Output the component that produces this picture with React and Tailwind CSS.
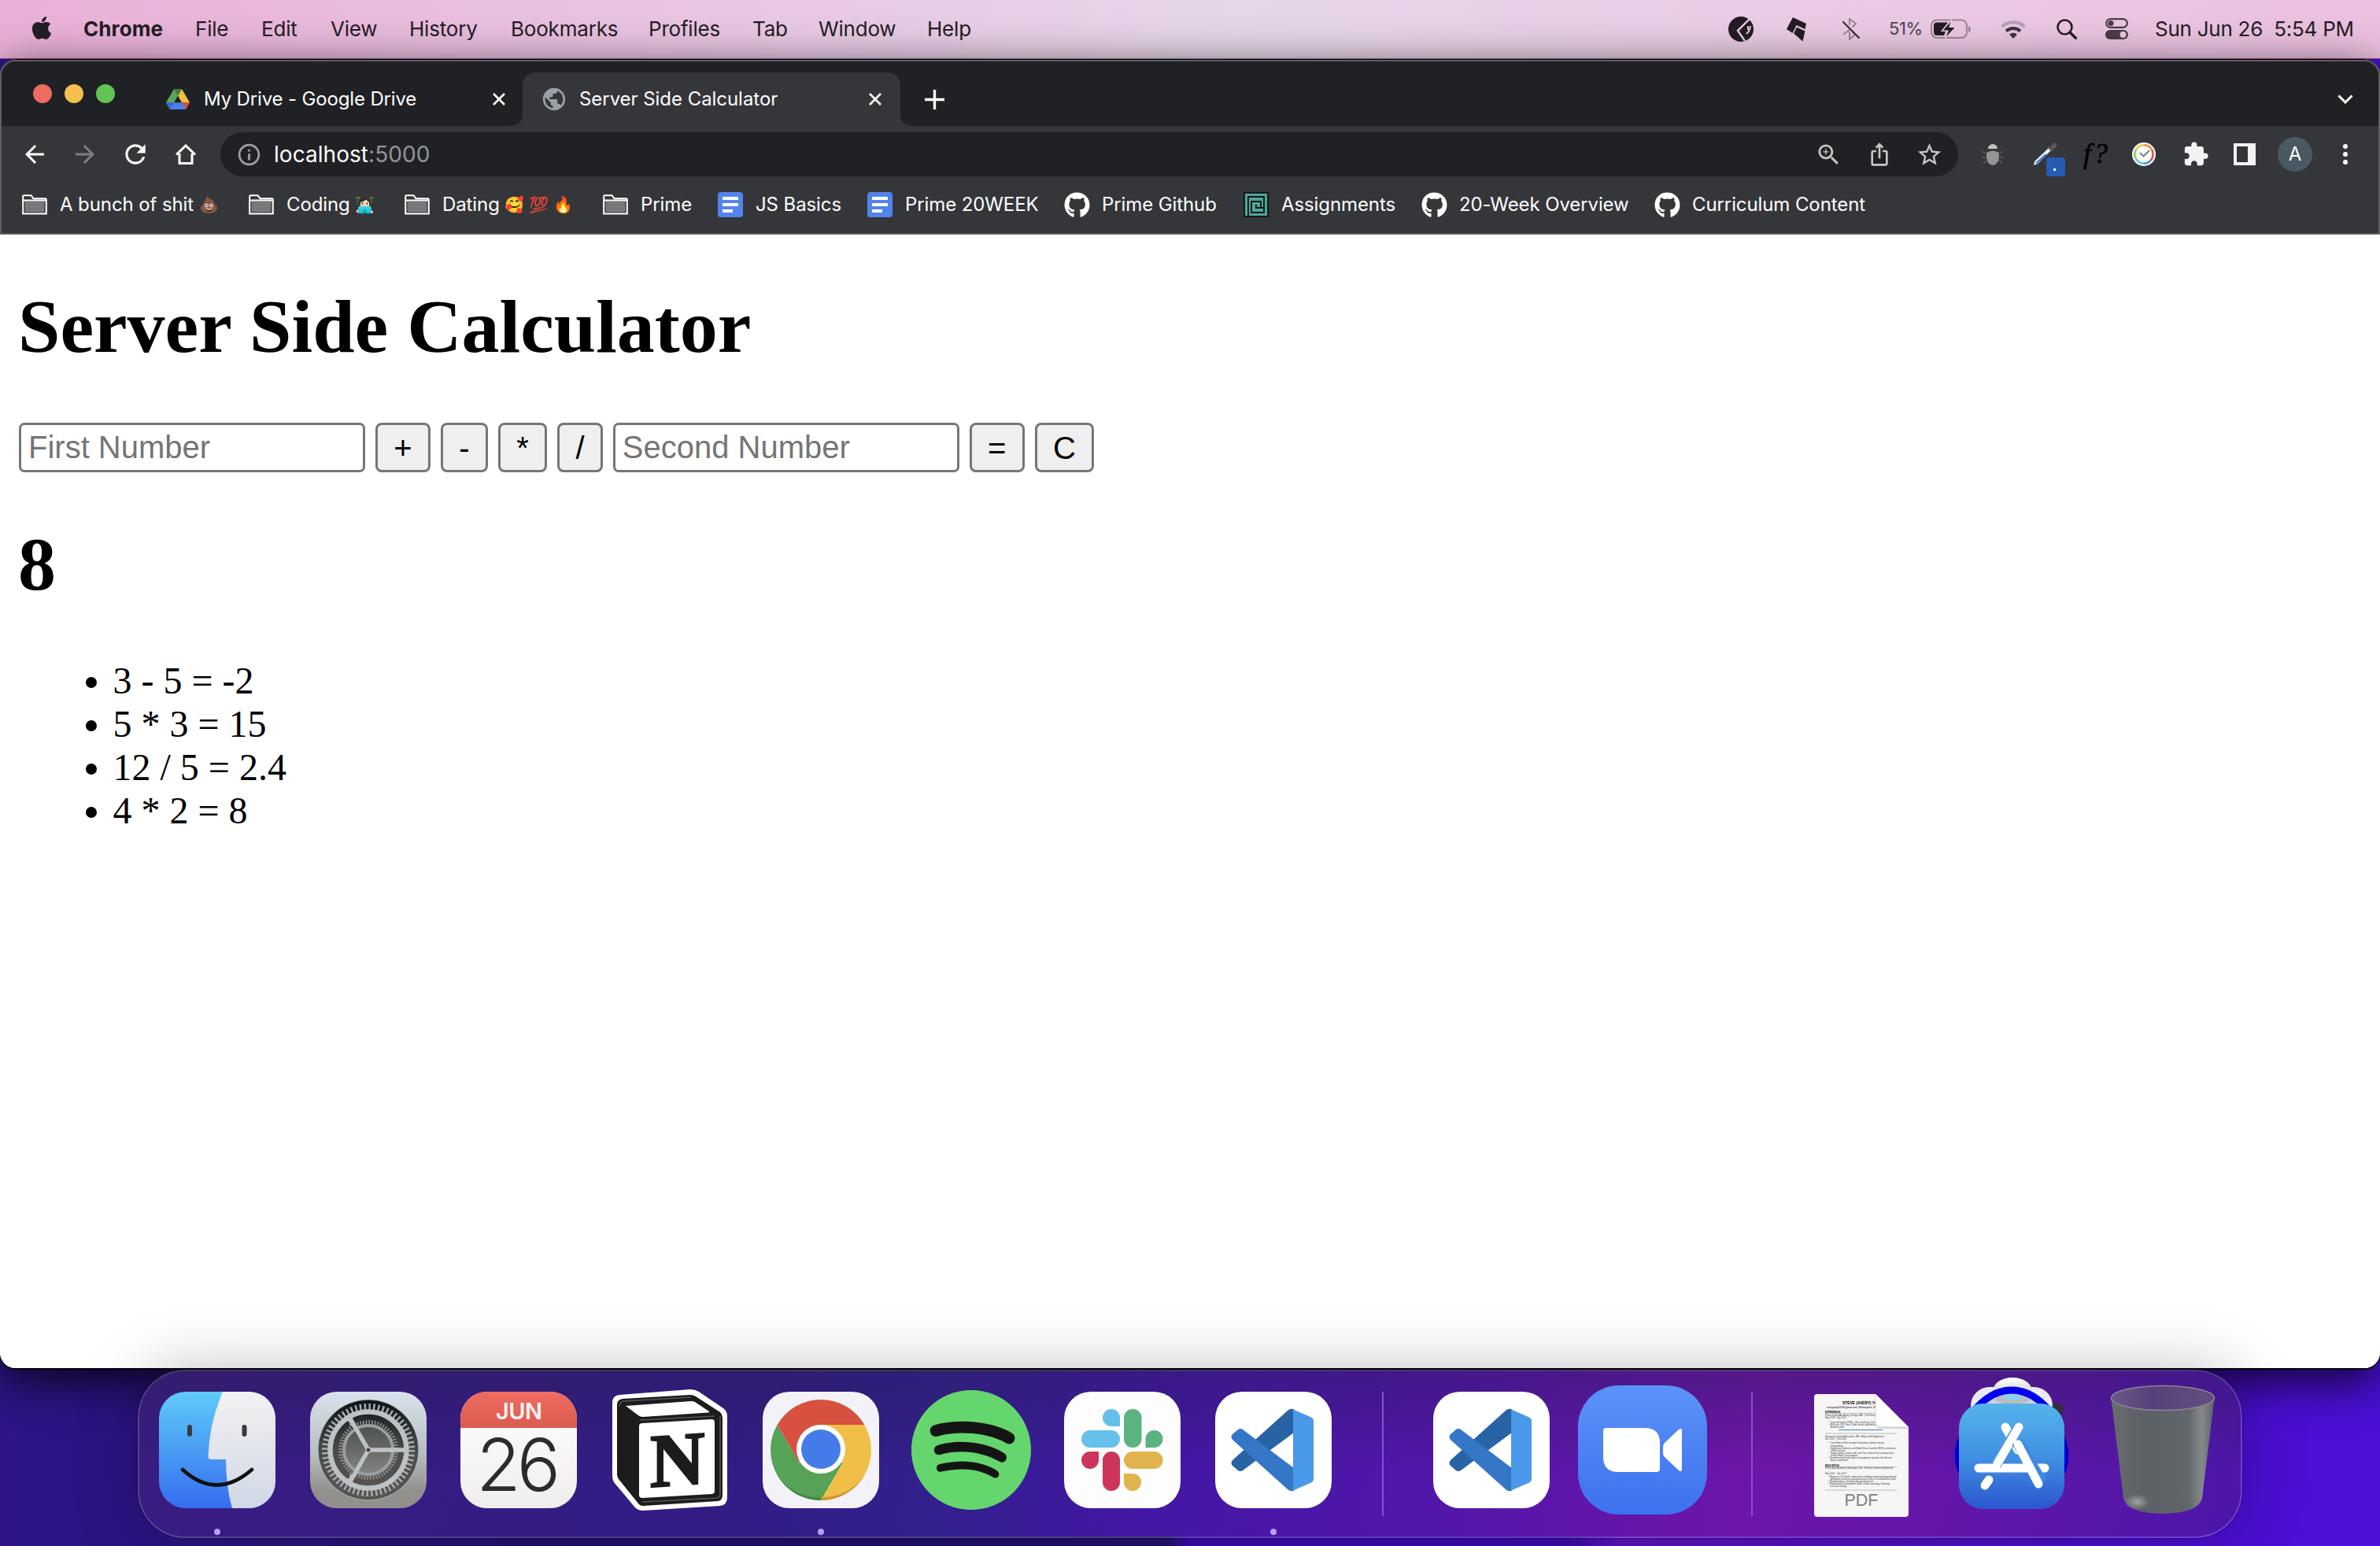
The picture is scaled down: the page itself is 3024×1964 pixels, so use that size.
import React from "react";
import { FaApple, FaGithub, FaSpotify } from "react-icons/fa";
import {
  MdArrowBack,
  MdArrowForward,
  MdRefresh,
  MdInfoOutline,
  MdZoomIn,
  MdIosShare,
  MdStarBorder,
  MdExtension,
  MdPublic,
} from "react-icons/md";

/* ---------- macOS menu bar ---------- */

const menus = [
  ["File", "w-[84px]"],
  ["Edit", "w-[88px]"],
  ["View", "w-[100px]"],
  ["History", "w-[129px]"],
  ["Bookmarks", "w-[175px]"],
  ["Profiles", "w-[132px]"],
  ["Tab", "w-[84px]"],
  ["Window", "w-[138px]"],
  ["Help", "w-[80px]"],
];

function MenuBar() {
  return (
    <header className="flex h-[74px] shrink-0 items-center whitespace-nowrap bg-linear-to-r from-[#eab0d7] via-[#e6d6ea] via-52% to-[#ecc0df] pb-px pl-10 pr-[34px] text-[26px] text-[#241c24]">
      <FaApple className="h-[33px] w-[26px] -translate-y-[1px]" />
      <span className="ml-[40px] w-[142px] font-bold tracking-[0.1px]">Chrome</span>
      {menus.map(([label, w]) => (
        <span key={label} className={w + " tracking-[-0.2px]"}>
          {label}
        </span>
      ))}
      <div className="ml-auto flex items-center">
        <svg className="h-8 w-8" viewBox="0 0 32 32">
          <circle cx="16" cy="16" r="16" fill="#241c24" />
          <path d="M27 3L12 18l9 13" fill="none" stroke="#e9d0e6" strokeWidth="2.4" />
          <path d="M28 12q0 6-5 10M25 12v5" fill="none" stroke="#e9d0e6" strokeWidth="2" />
        </svg>
        <svg className="ml-[42px] h-8 w-[26px]" viewBox="0 0 26 32">
          <path d="M8 1l17 8-1.500 7-11-5-5 10L0 16z" fill="#241c24" />
          <path d="M13 13.500l10.500 5-3 13L9 21.500z" fill="#241c24" />
        </svg>
        <svg className="ml-[45px] h-7 w-[22px]" viewBox="0 0 22 28" fill="none" strokeLinecap="round">
          <path d="M2 20l7-5M9 8V1l8 6-4 4M9 18v9l7-6-3-3" stroke="#9b8499" strokeWidth="2" />
          <path d="M1 5l20 20" stroke="#3b3039" strokeWidth="2.2" />
        </svg>
        <span className="ml-[37px] w-[47px] text-[22px] tracking-[-0.4px] text-[#4d424d]">51%</span>
        <svg className="ml-[6px] h-[26px] w-[51px]" viewBox="0 0 51 26">
          <rect x="1" y="1.500" width="45" height="22.500" rx="7" fill="none" stroke="#9a8798" strokeWidth="2" />
          <path d="M48 9q3 1 3 4t-3 4z" fill="#9a8798" />
          <path d="M8 4.500h14L13 16h6l-2 5H8q-4 0-4-4V8.500q0-4 4-4z" fill="#241c24" />
          <path d="M27 1L14.500 15h7.500l-3.500 10L32 10.500h-8z" fill="#241c24" stroke="#ebcde4" strokeWidth="1.200" />
        </svg>
        <svg className="ml-[38px] h-6 w-8" viewBox="0 0 32 24" fill="none">
          <path d="M1.500 9a21 21 0 0 1 29 0" stroke="#b7a0b5" strokeWidth="4" />
          <path d="M7 14.500a13 13 0 0 1 18 0" stroke="#3d333d" strokeWidth="4" />
          <path d="M16 24l-5-5.200a7 7 0 0 1 10 0z" fill="#3d333d" />
        </svg>
        <svg className="ml-[39px] h-[26px] w-[26px]" viewBox="0 0 26 26" fill="none" stroke="#241c24">
          <circle cx="10.500" cy="10.500" r="9" strokeWidth="2.600" />
          <path d="M17 17l7.500 7.500" strokeWidth="3.200" strokeLinecap="round" />
        </svg>
        <svg className="ml-[36px] h-[27px] w-[29px]" viewBox="0 0 29 27">
          <rect x="1.200" y="1.200" width="26.600" height="10.600" rx="5.300" fill="none" stroke="#4a3d49" strokeWidth="2.200" />
          <circle cx="7" cy="6.500" r="3.600" fill="#4a3d49" />
          <rect x="0" y="15" width="29" height="12" rx="6" fill="#4a3d49" />
          <circle cx="22.500" cy="21" r="4" fill="#ecc8e1" />
        </svg>
        <span className="ml-[34px] w-[252px] whitespace-pre tracking-[-0.25px]">Sun Jun 26  5:54 PM</span>
      </div>
    </header>
  );
}

/* ---------- Browser chrome ---------- */

function CloseX() {
  return (
    <svg className="h-4 w-4" viewBox="0 0 16 16" stroke="#fff" strokeWidth="2.600">
      <path d="M1 1l14 14M15 1L1 15" />
    </svg>
  );
}

function DriveIcon() {
  return (
    <svg className="h-[26px] w-[30px]" viewBox="0 0 30 26">
      <path d="M10 0l5 8.700L5 26 0 17.300z" fill="#58a55c" />
      <path d="M20 0l10 17.300H20L10 0z" fill="#f1bf42" />
      <path d="M10 0l5 8.700L20 0z" fill="#3c7d3e" />
      <path d="M0 17.300h30L25 26H5z" fill="#4a7fe8" />
      <path d="M20 17.300h10L25 26z" fill="#d85140" />
      <path d="M0 17.300h10L5 26z" fill="#3567d6" />
    </svg>
  );
}

function TabStrip() {
  return (
    <div className="flex h-[82px] items-end bg-[#202124] text-[24px] text-white">
      <div className="flex h-[68px] w-[646px] items-center pl-[40px]">
        <div className="flex -translate-y-[7px] gap-4">
          <span className="size-6 rounded-full bg-[#ed6b5f]" />
          <span className="size-6 rounded-full bg-[#f5bf4f]" />
          <span className="size-6 rounded-full bg-[#61c554]" />
        </div>
        <span className="ml-[65px]"><DriveIcon /></span>
        <span className="ml-[18px] w-[367px] whitespace-nowrap tracking-[-0.15px]">My Drive - Google Drive</span>
        <CloseX />
      </div>
      <svg className="size-4" viewBox="0 0 16 16"><path d="M16 0v16H0Q16 16 16 0z" fill="#35363a" /></svg>
      <div className="flex h-[68px] w-[480px] items-center rounded-t-[16px] bg-[#35363a] pl-[23px]">
        <MdPublic className="size-[34px] text-[#9aa0a6]" />
        <span className="ml-[15px] w-[368px] whitespace-nowrap tracking-[-0.05px]">Server Side Calculator</span>
        <CloseX />
      </div>
      <svg className="size-4" viewBox="0 0 16 16"><path d="M0 0v16h16Q0 16 0 0z" fill="#35363a" /></svg>
      <div className="flex h-[68px] flex-1 items-center justify-between pl-[15px] pr-[32px]">
        <svg className="size-[25px]" viewBox="0 0 25 25" stroke="#fff" strokeWidth="3.400"><path d="M12.500 0v25M0 12.500h25" /></svg>
        <svg className="h-[12px] w-[20px]" viewBox="0 0 20 12" fill="none" stroke="#fff" strokeWidth="3"><path d="M1.500 1.500L10 10l8.500-8.500" /></svg>
      </div>
    </div>
  );
}

function Toolbar() {
  return (
    <div className="flex h-[72px] items-center text-white">
      <MdArrowBack className="ml-[24px] size-9" />
      <MdArrowForward className="ml-[28px] size-9 text-[#7d7e81]" />
      <MdRefresh className="ml-[27px] size-[38px]" />
      <svg className="ml-[31px] h-[26px] w-[28px]" viewBox="0 0 28 26" fill="none" stroke="#fff" strokeWidth="3">
        <path d="M2 13.500L14 2l12 11.500M6 12v12.500h16V12" />
      </svg>
      <div className="ml-[30px] flex h-14 w-[2208px] items-center rounded-full bg-[#202124] pl-[20px] pr-[19px]">
        <MdInfoOutline className="size-[33px] text-[#9aa0a6]" />
        <span className="ml-[15px] text-[28px] tracking-[0.05px]">
          localhost<span className="text-[#93959a]">:5000</span>
        </span>
        <div className="ml-auto flex items-center text-[#c5c6c8]">
          <MdZoomIn className="size-[35px]" />
          <MdIosShare className="ml-[31px] size-[32px]" />
          <MdStarBorder className="ml-[30px] size-[35px]" />
        </div>
      </div>
      <svg className="ml-[30px] size-7" viewBox="0 0 28 28">
        <path d="M8 7a6 6 0 0 1 12 0z" fill="#c3c3c3" />
        <path d="M6 12q8-5 16 0v6q-1 9-8 10-7-1-8-10z" fill="#949494" />
        <path d="M5 13l-4-3M5 18H0M6 22l-4 4M23 13l4-3M23 18h5M22 22l4 4" stroke="#5e5f62" strokeWidth="1.500" />
      </svg>
      <div className="relative ml-[37px] h-8 w-8">
        <svg className="size-8" viewBox="0 0 32 32">
          <path d="M20 8L2 25l-1 5 5-2 17-17z" fill="#e8ecf4" />
          <path d="M15 16L3 27l2 1 14-12z" fill="#3d7cd0" />
          <path d="M18 7l6 6 2-3 4-4q1-5-4-4l-4 5-2-1z" fill="#5b5b5b" />
        </svg>
        <div className="absolute left-[17px] top-[20px] flex h-6 w-6 items-start justify-center rounded-[4px] bg-[#275bb3]">
          <span className="mt-[14px] -ml-[3px] size-[3px] bg-white" />
        </div>
      </div>
      <span className="ml-[32px] w-[38px] -translate-y-px whitespace-nowrap font-['Liberation_Serif'] text-[36px] italic leading-8 tracking-[3px] text-black [-webkit-text-stroke:0.6px_black]">f?</span>
      <svg className="ml-[24px] size-[30px]" viewBox="0 0 30 30" fill="none">
        <circle cx="15" cy="15" r="15" fill="#fff" />
        <g strokeWidth="2.600">
          <path d="M15 3.300a11.700 11.700 0 0 1 10 5.700" stroke="#f08a3c" />
          <path d="M25 9a11.700 11.700 0 0 1-2 14.500" stroke="#e2504a" />
          <path d="M23 23.500a11.700 11.700 0 0 1-8 3.200" stroke="#3d9bd6" />
          <path d="M15 26.700a11.700 11.700 0 0 1-10-6" stroke="#4fd0d8" />
          <path d="M5 20.700a11.700 11.700 0 0 1 1-13" stroke="#8fd14a" />
          <path d="M6 7.700a11.700 11.700 0 0 1 9-4.400" stroke="#f2c84b" />
        </g>
        <path d="M10 13l4.500 4.500L22 10" stroke="#6d8a80" strokeWidth="2" />
      </svg>
      <MdExtension className="ml-[34px] size-[34px] text-[#f1f3f4]" />
      <svg className="ml-[31px] size-7" viewBox="0 0 28 28"><path fillRule="evenodd" d="M0 0h28v28H0zM4 4v20h14V4z" fill="#f1f3f4" /></svg>
      <span className="ml-[28px] flex size-11 items-center justify-center rounded-full bg-[#485962] text-[24px]">A</span>
      <svg className="ml-[39px] h-7 w-[6px]" viewBox="0 0 6 28" fill="#fff">
        <circle cx="3" cy="4" r="3" /><circle cx="3" cy="14" r="3" /><circle cx="3" cy="24" r="3" />
      </svg>
    </div>
  );
}

function FolderIcon() {
  return (
    <svg className="h-[26px] w-8 shrink-0" viewBox="0 0 32 26">
      <path d="M1.200 24.500V2.500q0-1.300 1.300-1.300h9l3 4h15q1.300 0 1.300 1.300v18z" fill="#35363a" stroke="#fff" strokeWidth="2" />
      <path d="M3.500 9h25v13.500h-25z" fill="#77787b" />
      <path d="M1 7.600h30" stroke="#fff" strokeWidth="2" />
    </svg>
  );
}

function DocsIcon() {
  return (
    <svg className="size-8 shrink-0" viewBox="0 0 32 32">
      <rect width="32" height="32" rx="4" fill="#5383ec" />
      <path d="M6 8h20M6 16h20M6 24h13" stroke="#fff" strokeWidth="4" />
    </svg>
  );
}

function MazeIcon() {
  return (
    <svg className="size-8 shrink-0" viewBox="0 0 32 32" fill="none" stroke="#111" strokeWidth="1.800">
      <rect x="1" y="1" width="30" height="30" fill="#4aa79b" />
      <path d="M6 31V6h20v20H10V12h12v8h-6v-4M26 20h-4" />
    </svg>
  );
}

const GithubIcon = () => <FaGithub className="size-[33px] shrink-0 -mr-px text-white" />;

const bookmarks = [
  ["w-[288px]", FolderIcon, "A bunch of shit", "💩", "ml-[7px]"],
  ["w-[198px]", FolderIcon, "Coding", "👩🏻‍💻", "ml-[7px]"],
  ["w-[252px]", FolderIcon, "Dating", "🥰💯🔥", "ml-[7px]"],
  ["w-[146px]", FolderIcon, "Prime"],
  ["w-[190px]", DocsIcon, "JS Basics"],
  ["w-[250px]", DocsIcon, "Prime 20WEEK"],
  ["w-[228px]", GithubIcon, "Prime Github"],
  ["w-[226px]", MazeIcon, "Assignments"],
  ["w-[296px]", GithubIcon, "20-Week Overview"],
  ["w-[300px]", GithubIcon, "Curriculum Content"],
];

function BookmarksBar() {
  return (
    <div className="flex h-[64px] items-center whitespace-nowrap pb-2 pl-[26px] text-[24px] tracking-[-0.1px] text-white">
      {bookmarks.map(([w, Icon, label, emoji, gap]) => (
        <div key={label} className={"flex shrink-0 items-center " + w}>
          <Icon />
          <span className="ml-[16px]">{label}</span>
          {emoji && (
            <span className={"font-['Noto_Color_Emoji'] text-[20px] tracking-[6px] " + gap}>{emoji}</span>
          )}
        </div>
      ))}
    </div>
  );
}

/* ---------- Page ---------- */

const history = ["3 - 5 = -2", "5 * 3 = 15", "12 / 5 = 2.4", "4 * 2 = 8"];

function NumberInput({ placeholder }) {
  return (
    <input
      placeholder={placeholder}
      className="h-[63px] w-[440px] rounded-[7px] border-3 border-[#767676] bg-white pl-[9px] pr-2 placeholder:text-[#757575]"
    />
  );
}

function Op({ children }) {
  return (
    <button className="h-[63px] rounded-[8px] border-3 border-[#767676] bg-[#efefef] px-[20.5px] leading-none text-black">
      {children}
    </button>
  );
}

function CalculatorPage() {
  return (
    <main className="flex-1 bg-white px-6 pt-[62px] font-['Liberation_Serif',serif] text-[48px] leading-[55px] text-black">
      <h1 className="-ml-px text-[96px] font-bold leading-[110px]">Server Side Calculator</h1>
      <form className="mt-[67px] flex items-center gap-[12.700px] font-['Liberation_Sans',sans-serif] text-[40px]">
        <NumberInput placeholder="First Number" />
        <Op>+</Op>
        <Op>-</Op>
        <Op>*</Op>
        <Op>/</Op>
        <NumberInput placeholder="Second Number" />
        <Op>=</Op>
        <Op>C</Op>
      </form>
      <h2 className="-ml-px mt-[62px] text-[96px] font-bold leading-[110px]">8</h2>
      <ul className="mt-[65px] list-disc pl-[119.500px]">
        {history.map((h) => (
          <li key={h}>{h}</li>
        ))}
      </ul>
    </main>
  );
}

/* ---------- Dock ---------- */

function Finder() {
  return (
    <svg className="size-[148px] rounded-[34px]" viewBox="0 0 148 148">
      <defs>
        <linearGradient id="fb" x2="0" y2="1"><stop stopColor="#5fcbfa" /><stop offset="1" stopColor="#356df0" /></linearGradient>
        <linearGradient id="fw" x2="0" y2="1"><stop stopColor="#f3f1f2" /><stop offset="1" stopColor="#d0d8e6" /></linearGradient>
      </defs>
      <path d="M0 0h148v148H0z" fill="url(#fb)" />
      <path d="M81 0Q64 40 62.500 82q0 4 4 4H85q0 34 8 62h55V0z" fill="url(#fw)" />
      <g fill="none" stroke="#222" strokeLinecap="round">
        <path d="M39 45v9M108.500 45v9" strokeWidth="6" stroke="#3a3a3e" />
        <path d="M30 99q43 39 88 0" strokeWidth="4.600" stroke="#111" />
      </g>
    </svg>
  );
}

function Settings() {
  return (
    <svg className="size-[148px] rounded-[34px]" viewBox="0 0 148 148">
      <defs>
        <linearGradient id="sg" x2="0" y2="1"><stop stopColor="#d9e4ec" /><stop offset=".55" stopColor="#b6bcbf" /><stop offset=".85" stopColor="#92908d" /></linearGradient>
        <linearGradient id="sd" x2="0" y2="1"><stop stopColor="#0c1216" /><stop offset=".5" stopColor="#4a4c4c" /><stop offset="1" stopColor="#5a5654" /></linearGradient>
        <linearGradient id="sc" x2="0" y2="1"><stop stopColor="#4a5050" /><stop offset="1" stopColor="#86837f" /></linearGradient>
      </defs>
      <path d="M0 0h148v148H0z" fill="url(#sg)" />
      <circle cx="74" cy="74" r="64" fill="url(#sd)" stroke="#c4c8ca" strokeWidth=".8" />
      <g fill="none">
        <circle cx="74" cy="74" r="55" stroke="#a9aeb0" strokeWidth="8" strokeDasharray="2.400 3.360" />
        <circle cx="74" cy="74" r="35.500" stroke="#8c9091" strokeWidth="5" strokeDasharray="1.700 2.020" />
        <circle cx="74" cy="74" r="31" fill="url(#sc)" stroke="#9b9fa0" strokeWidth="4" />
        <circle cx="74" cy="74" r="48.500" stroke="#bcc2c5" strokeWidth="6.500" />
        <g stroke="#bcc2c5" strokeWidth="5.500">
          <path d="M74 74h46M74 74L51 34M74 74l-23 40" />
        </g>
        <g fill="#bcc2c5">
          <path d="M123 64q-1 8-8 8v4q7 0 8 8zM45 36q8 3 5 8l4-2q-4-7 3-11zM45 112q8-3 5-8l4 2q-4 7 3 11z" />
        </g>
      </g>
      <circle cx="74" cy="74" r="4" fill="#b3b8ba" />
      <circle cx="74" cy="74" r="2.200" fill="#34393b" />
    </svg>
  );
}

function Calendar() {
  return (
    <div className="flex size-[148px] flex-col items-center overflow-hidden rounded-[34px] bg-linear-to-b from-white to-[#efeeec]">
      <div className="flex h-[46px] w-full items-center justify-center bg-linear-to-b from-[#ef6c60] to-[#db5b50] pt-[3px] text-[29px] font-semibold leading-none tracking-[-0.5px] text-[#f5f3f3]">JUN</div>
      <div className="mt-[1px] -translate-x-[3px] text-[92px] font-light leading-[92px] tracking-[-5px] text-[#2b2b2b]">26</div>
    </div>
  );
}

function Notion() {
  return (
    <svg className="h-[154px] w-[148px]" viewBox="0 0 148 154">
      <path d="M1 17Q1 8 10 7L100 0q6 0 11 3l31 21q5 4 5 10v103q0 10-9 11l-98 6q-7 0-11-5L3 118q-2-4-2-8z" fill="#fff" />
      <path d="M7 20q0-7 7-8l86-5q4 0 7 2l31 20q3 3 3 7v98q0 7-6 8l-95 6q-4 0-6-3L9 114q-2-3-2-6z" fill="#1c1c1c" />
      <path d="M18 21l83-6q3 0 5 1l18 12q1 1-1 1.500L40 35q-4 0-6-2z" fill="#fff" />
      <path d="M35 47q0-4 4-4l88-5q4 0 4 4v87q0 4-4 4l-88 5q-4 0-4-4z" fill="#fff" />
      <path d="M10 22q0-6 5-7l86-5M36 39l95-5M138 34v98q0 5-4 6l-95 5" fill="none" stroke="#555" strokeWidth="1.500" />
      <text transform="translate(49 124) skewY(-4)" fontFamily="Liberation Serif" fontWeight="bold" fontSize="96" fill="#1c1c1c" stroke="#1c1c1c" strokeWidth="2.500">N</text>
    </svg>
  );
}

function Chrome() {
  return (
    <svg className="size-[148px] rounded-[34px]" viewBox="0 0 148 148">
      <path d="M0 0h148v148H0z" fill="#f3f2f8" />
      <path d="M129.400 42A64 64 0 0 1 74 138l27.700-48L74 42z" fill="#f1bf47" />
      <path d="M74 138A64 64 0 0 1 18.600 42l27.700 48h55.400z" fill="#56a256" />
      <path d="M18.600 42a64 64 0 0 1 110.800 0H74L46.300 90z" fill="#d75040" />
      <path d="M18 105a64 64 0 0 0 56 33v-4a64 64 0 0 1-56-29z" fill="#438a44" />
      <path d="M130 105a64 64 0 0 1-56 33v-4a64 64 0 0 0 56-29z" fill="#d39535" />
      <circle cx="74" cy="73" r="31" fill="#fff" />
      <circle cx="74" cy="73" r="25" fill="#447be8" />
    </svg>
  );
}

function Spotify() {
  return (
    <div className="flex size-[152px] items-center justify-center rounded-full bg-[radial-gradient(circle,#141414_60%,#65d56e_61%)]">
      <FaSpotify className="size-[156px] shrink-0 text-[#65d56e]" />
    </div>
  );
}

function Slack() {
  return (
    <svg className="size-[148px] rounded-[34px]" viewBox="0 0 148 148">
      <path d="M0 0h148v148H0z" fill="#fdfdfd" />
      <g fill="#65c1ea"><path d="M71 44V33a11 11 0 0 0-22 0 11 11 0 0 0 11 11z" /><rect x="22" y="49" width="49" height="22" rx="11" /></g>
      <g fill="#5bb381"><rect x="76" y="22" width="22.500" height="49" rx="11" /><path d="M103.500 71V60a11 11 0 1 1 11 11z" /></g>
      <g fill="#cd355a"><path d="M44 76v11a11 11 0 1 1-11-11z" /><rect x="49" y="76" width="22" height="50" rx="11" /></g>
      <g fill="#e1b34c"><rect x="76" y="76" width="49.500" height="22" rx="11" /><path d="M76 104h11a11 11 0 1 1-11 11z" /></g>
    </svg>
  );
}

function VSCode() {
  return (
    <svg className="size-[148px] rounded-[34px] bg-white" viewBox="0 0 148 148">
      <path d="M92 24q3-3 8-2v30L35 100q-3 2-6 0l-7-6q-3-3 0-7z" fill="#2863a5" />
      <path d="M92 124q3 3 8 2V97L35 48q-3-2-6 0l-7 6q-3 3 0 7z" fill="#3477c6" />
      <path d="M98 22l24 10.500q3 1.500 3 5v73q0 3.500-3 5L98 126q1-1 1-3V25q0-2-1-3z" fill="#4a98e9" />
    </svg>
  );
}

function Zoom() {
  return (
    <svg className="size-[164px] rounded-[52px] bg-linear-to-b from-[#5c93f7] to-[#3d70ef]" viewBox="0 0 164 164" fill="#fff">
      <path d="M36 54h49q19 0 19 19v33q0 4-4 4H51q-19 0-19-19V58q0-4 4-4z" />
      <path d="M110 73l18-17q4-3 4 2v48q0 5-4 2l-18-17q-2-2-2-5v-8q0-3 2-5z" />
    </svg>
  );
}

/* baseline, text, left edge, rendered length */
const resume = [
  [28, "Prime Digital Academy | Fargo, MN - Full Stack", 14, 64],
  [31, "May 2022 - Sep 2022", 14, 27],
  [36.500, "•  Currently Known: HTML, CSS, JavaScript, jQuery", 18, 62],
  [40, "•  Will Learn: SQL, React, Node, Heroku, Authentication", 18, 64],
  [43, "    Authentication", 18, 20],
  [54.500, "Software for Good | Minneapolis, MN - Ruby on Rails Apprentice", 14, 75],
  [57.500, "Nov 2021 - Feb 2022", 14, 27],
  [63, "•  Learn Ruby on Rails through Codecademy, Udemy, and pair", 18, 71],
  [66.500, "    programming", 18, 19],
  [69.500, "•  Create basic websites with Model View Controller (MVC) architecture", 18, 86],
  [72.500, "    CRUD features", 18, 22],
  [76, "•  Support junior, senior staff, and City of Saint Paul to design new", 18, 83],
  [79, "    for their Right Track program", 18, 37],
  [82, "•  Familiarize self with project management systems like Harvest", 18, 81],
  [85, "    Asana, and Notion", 18, 25],
  [95, "Prime Digital Academy | Minneapolis, MN - Full Stack Software Engineering", 14, 86],
  [102, "May 2022 - Sep 2022", 14, 27],
  [105.500, "•  Rigorous 20 week, immersive software engineering program", 17, 88],
  [108.500, "    developing technical and professional skills in a collaborative team", 17, 87],
  [111.500, "•  Weekly projects, including solo and client work", 17, 58],
  [114.500, "•  Professional Development Skills, Public speaking, Diversity", 17, 79],
  [117.500, "    Inclusion training", 17, 24],
];

function PdfFile() {
  return (
    <svg className="h-[156px] w-[120px] translate-y-[7px]" viewBox="0 0 120 156" fontFamily="Liberation Sans">
      <path d="M0 4q0-4 4-4h74l42 42v110q0 4-4 4H4q-4 0-4-4z" fill="#f6f6f6" />
      <text x="36" y="13" fontSize="5" fontWeight="bold" textLength="44" lengthAdjust="spacingAndGlyphs">STEVE (AVERY) YA</text>
      <text x="16" y="17.500" fontSize="3.200" textLength="62" lengthAdjust="spacingAndGlyphs">averyyang2018@gmail.com | Minneapolis, M</text>
      <g fontSize="3" fontWeight="bold">
        <text x="14" y="24">EXPERIENCE</text>
        <text x="14" y="91.500">EDUCATION</text>
      </g>
      <path d="M14 24.500h68M14 50h91M14 92.500h91M14 122h91" stroke="#999" strokeWidth=".6" />
      <g fontSize="3" fill="#333">
        {resume.map(([y, t, x, len]) => (
          <text key={y} x={x} y={y} textLength={len} lengthAdjust="spacingAndGlyphs" xmlSpace="preserve">{t}</text>
        ))}
      </g>
      <path d="M31 45.500h56" stroke="#4a78d8" strokeWidth="1.200" />
      <path d="M78 0l42 42H84q-6 0-6-6z" fill="#fff" stroke="#cfcfcf" />
      <path d="M79 40q2 3 6 3h35" fill="none" stroke="#bdbdbd" />
      <text x="38.500" y="141.500" fontSize="22.500" fill="#808080" textLength="43" lengthAdjust="spacingAndGlyphs">PDF</text>
    </svg>
  );
}

function AppStore() {
  return (
    <svg className="h-[170px] w-[152px] -translate-y-[8px]" viewBox="0 0 152 170">
      <defs>
        <linearGradient id="as" x2="0" y2="1"><stop stopColor="#55b4ec" /><stop offset=".5" stopColor="#4190e2" /><stop offset="1" stopColor="#2b57cf" /></linearGradient>
        <linearGradient id="ab" x2="0" y2="1"><stop stopColor="#ffffff" /><stop offset="1" stopColor="#b9bac0" /></linearGradient>
      </defs>
      <rect x="24" y="13" width="104" height="50" rx="24" fill="#ece9f7" />
      <ellipse cx="77" cy="17" rx="24.500" ry="16" fill="url(#ab)" />
      <path d="M124 42l8-10 10 6-5 18z" fill="#33303c" />
      <path d="M26 50Q48 18 76 18t50 32z" fill="#cfd0dc" />
      <ellipse cx="77" cy="28" rx="22" ry="7" fill="#b9bcc4" />
      <ellipse cx="77" cy="26" rx="12" ry="3" fill="#7fd6f8" />
      <path d="M24 48Q48 17 76 17T128 48" fill="none" stroke="#0000ee" strokeWidth="9" />
      <path d="M14 66q-21 34 0 68zM138 66q21 34 0 68z" fill="#0000d0" />
      <rect x="9" y="34" width="134" height="134" rx="31" fill="url(#as)" />
      <g stroke="#fff" strokeWidth="11" strokeLinecap="round" fill="none">
        <path d="M68 64l16 29M34 116h84" />
      </g>
      <path d="M85 64L56 112" stroke="#4796e4" strokeWidth="14" />
      <path d="M85 64L58 110" stroke="#fff" strokeWidth="11" strokeLinecap="round" />
      <path d="M83 82l31 52" stroke="#3f8ae0" strokeWidth="15" />
      <path d="M84 86l26 50" stroke="#fff" strokeWidth="11" strokeLinecap="round" />
      <path d="M47 131l-5 7" stroke="#fff" strokeWidth="11" strokeLinecap="round" />
      <path d="M36 123.500h54" stroke="#3f83dc" strokeWidth="3" />
    </svg>
  );
}

function Trash() {
  return (
    <svg className="h-[166px] w-[134px]" viewBox="0 0 134 166">
      <defs>
        <linearGradient id="tb"><stop stopColor="#6a6b6f" /><stop offset=".3" stopColor="#5b6165" /><stop offset=".75" stopColor="#606669" /><stop offset=".88" stopColor="#85898c" /><stop offset="1" stopColor="#5d5f66" /></linearGradient>
        <radialGradient id="tg" cx=".5" cy=".5" r=".5"><stop stopColor="#a0a3a5" /><stop offset="1" stopColor="#a0a3a5" stopOpacity="0" /></radialGradient>
        <linearGradient id="ti"><stop stopColor="#6b5a88" /><stop offset=".4" stopColor="#57407a" /><stop offset="1" stopColor="#65507f" /></linearGradient>
      </defs>
      <path d="M1.500 18L17 144q4 19 50 20 46-1 50-20L132.500 18z" fill="url(#tb)" />
      <ellipse cx="34" cy="149" rx="16" ry="10" fill="url(#tg)" />
      <ellipse cx="67" cy="17" rx="65.500" ry="15.500" fill="url(#ti)" stroke="#8a8595" strokeWidth="1.500" />
    </svg>
  );
}

function Cell({ children, running }) {
  return (
    <div className="relative flex h-full w-[191.700px] shrink-0 items-center justify-center pb-[10px]">
      {children}
      {running && <span className="absolute bottom-[2px] size-2 rounded-full bg-[#b99cff]" />}
    </div>
  );
}

const Separator = ({ w }) => (
  <div className={"flex h-full shrink-0 justify-center pt-[26px] " + w}>
    <span className="h-[158px] w-[2px] bg-[#8450d8]" />
  </div>
);

function Dock() {
  return (
    <nav className="relative mx-auto mt-[2px] flex h-[214px] w-[2674px] shrink-0 items-center rounded-[60px] border-2 border-white/20 bg-[linear-gradient(to_bottom,rgba(40,28,80,.35),rgba(60,25,140,0)_60%),linear-gradient(100deg,#3a1c82_0%,#321c84_28%,#32208c_38%,#4217a4_48%,#5216aa_62%,#6c16a8_76%,#6416a8_85%,#4c16a8_100%)] bg-clip-padding pl-[3px] shadow-[0_0_80px_rgba(0,0,0,.25),0_0_0_1px_rgba(0,0,0,.35)]">
      <Cell running><Finder /></Cell>
      <Cell><Settings /></Cell>
      <Cell><Calendar /></Cell>
      <Cell><Notion /></Cell>
      <Cell running><Chrome /></Cell>
      <Cell><Spotify /></Cell>
      <Cell><Slack /></Cell>
      <Cell running><VSCode /></Cell>
      <Separator w="w-[86px]" />
      <Cell><VSCode /></Cell>
      <Cell><Zoom /></Cell>
      <Separator w="w-[86px]" />
      <Cell><PdfFile /></Cell>
      <Cell><AppStore /></Cell>
      <Cell><Trash /></Cell>
    </nav>
  );
}

export default function App() {
  return (
    <div className="flex h-[1964px] w-[3024px] flex-col overflow-hidden bg-[linear-gradient(to_right,#2e1488_0%,#241070_25%,#22106c_49%,#3a0cb0_50%,#3a0cae_66%,#5e12c0_68%,#4a0ec8_85%,#4a10d8_100%)] font-['Inter',sans-serif]">
      <MenuBar />
      <div className="h-px shrink-0 bg-linear-to-r from-[#a03090] via-[#8f8aa0] to-[#a04080]" />
      <div className="flex h-[1663px] shrink-0 flex-col overflow-hidden rounded-[20px] bg-white shadow-[0_2px_0_0_rgba(0,0,0,.9),0_16px_60px_rgba(0,0,0,.8)]">
        <div className="bg-black pt-px">
          <div className="rounded-t-[20px] border-2 border-[#5f6064] bg-[#35363a]">
            <div className="overflow-hidden rounded-t-[18px]"><TabStrip /></div>
            <Toolbar />
            <BookmarksBar />
          </div>
        </div>
        <CalculatorPage />
      </div>
      <Dock />
    </div>
  );
}
